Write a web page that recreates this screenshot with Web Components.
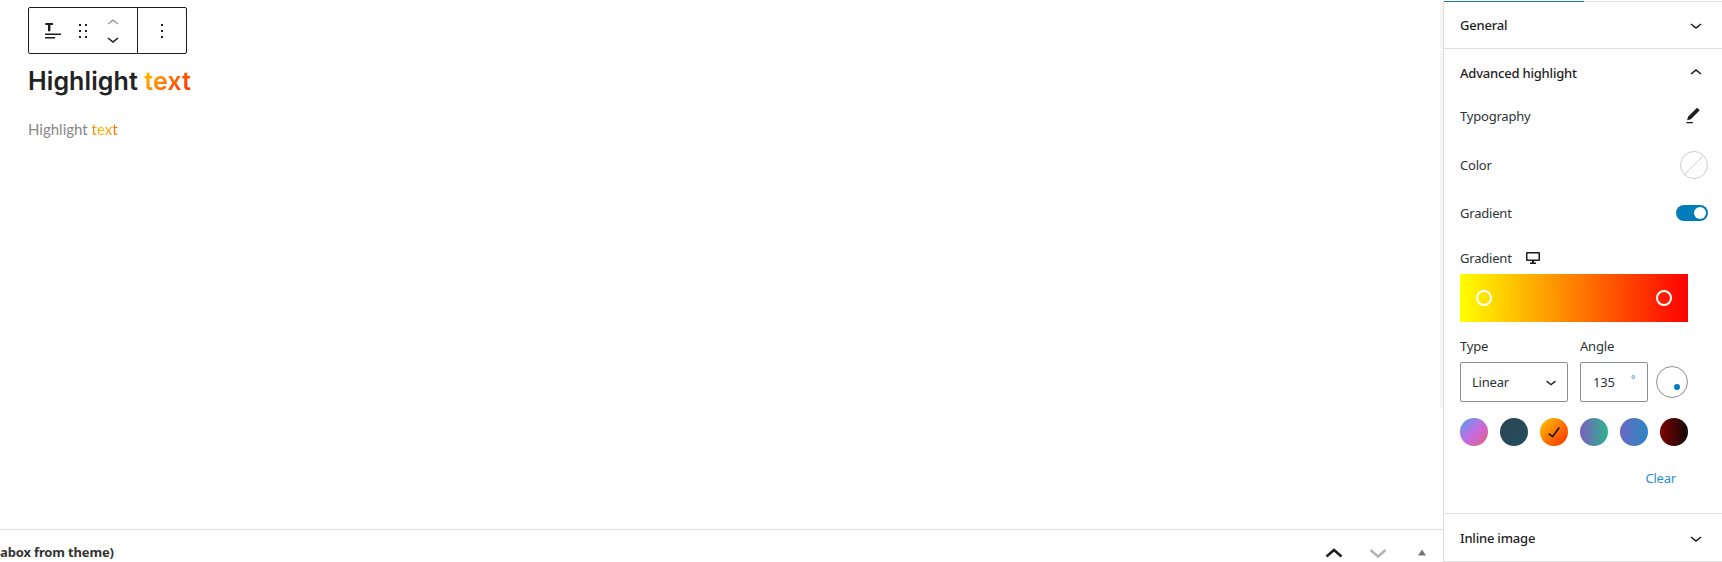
<!DOCTYPE html>
<html>
<head>
<meta charset="utf-8">
<title>Highlight text</title>
<style>
  html, body { margin: 0; height: 100%; overflow: hidden; background: #fff; }
  body { font-family: "Noto Sans", sans-serif; }
</style>
</head>
<body>
<editor-layout>
  <editor-canvas slot="canvas">
    <block-toolbar></block-toolbar>
    <highlight-heading></highlight-heading>
    <highlight-para></highlight-para>
  </editor-canvas>
  <metabox-bar slot="bottom" title-text="abox from theme)"></metabox-bar>
  <settings-sidebar slot="side">
    <panel-section label="General"></panel-section>
    <panel-section label="Advanced highlight" open>
      <setting-row label="Typography">
        <svg slot="control" style="margin-right:5px" width="20" height="20" viewBox="0 0 24 24" fill="#1e1e1e"><path d="M20.1 5.1L16.9 2 6.2 12.7l-1.3 4.4 4.5-1.3L20.1 5.1zM4 20.8h8v-1.5H4v1.5z"/></svg>
      </setting-row>
      <setting-row label="Color" gap="17">
        <color-none slot="control"></color-none>
      </setting-row>
      <setting-row label="Gradient" gap="16">
        <toggle-switch slot="control"></toggle-switch>
      </setting-row>
      <gradient-editor></gradient-editor>
      <gradient-swatches></gradient-swatches>
      <clear-link></clear-link>
    </panel-section>
    <panel-section label="Inline image"></panel-section>
  </settings-sidebar>
</editor-layout>

<script>
const chevronDown = '<path d="M17.5 11.6L12 16l-5.5-4.4.9-1.2L12 14l4.5-3.6 1 1.2z"/>';
const chevronUp = '<path d="M6.5 12.4L12 8l5.5 4.4-.9 1.2L12 10l-4.5 3.6-1-1.2z"/>';

class EditorLayout extends HTMLElement {
  constructor() {
    super();
    this.attachShadow({ mode: 'open' }).innerHTML = `
      <style>
        :host { display: flex; height: 562px; width: 1722px; overflow: hidden; }
        .main { flex: 1; min-width: 0; display: flex; flex-direction: column; }
        .canvas { flex: 1; min-height: 0; background: linear-gradient(#f6f6f6, #f6f6f6) right top / 3px 408px no-repeat; }
        aside { width: 279px; flex: none; }
      </style>
      <div class="main">
        <div class="canvas"><slot name="canvas"></slot></div>
        <slot name="bottom"></slot>
      </div>
      <aside><slot name="side"></slot></aside>`;
  }
}

class EditorCanvas extends HTMLElement {
  constructor() {
    super();
    this.attachShadow({ mode: 'open' }).innerHTML = `
      <style>:host { display: block; padding: 7px 0 0 28px; }</style>
      <slot></slot>`;
  }
}

class BlockToolbar extends HTMLElement {
  constructor() {
    super();
    this.attachShadow({ mode: 'open' }).innerHTML = `
      <style>
        :host { display: flex; width: 159px; height: 47px; box-sizing: border-box; border: 1px solid #1e1e1e; border-radius: 2px; background: #fff; }
        .group { display: flex; align-items: center; }
        .first { width: 109px; box-sizing: border-box; padding-left: 12px; gap: 6px; border-right: 1px solid #1e1e1e; }
        .second { flex: 1; justify-content: center; }
        svg { display: block; fill: #1e1e1e; }
        .mover { width: 24px; display: flex; flex-direction: column; align-items: center; padding-top: 1px; }
        .mover svg:first-child { fill: #a0a0a0; }
      </style>
      <div class="group first">
        <svg width="24" height="24" viewBox="0 0 24 24"><path d="M4.3 4H12v1.9H9.4v6.3H7V5.9H4.3z"/><path d="M4 14.5h16V16H4zM4 18h10v1.5H4z"/></svg>
        <svg width="24" height="24" viewBox="0 0 24 24"><path d="M8 7h2V5H8v2zm0 6h2v-2H8v2zm0 6h2v-2H8v2zm6-14v2h2V5h-2zm0 8h2v-2h-2v2zm0 6h2v-2h-2v2z"/></svg>
        <div class="mover">
          <svg width="24" height="16" viewBox="0 4 24 16">${chevronUp}</svg>
          <svg width="24" height="16" viewBox="0 4 24 16">${chevronDown}</svg>
        </div>
      </div>
      <div class="group second">
        <svg width="24" height="24" viewBox="0 0 24 24"><path d="M13 19h-2v-2h2v2zm0-6h-2v-2h2v2zm0-6h-2V5h2v2z"/></svg>
      </div>`;
  }
}

class HighlightHeading extends HTMLElement {
  constructor() {
    super();
    this.attachShadow({ mode: 'open' }).innerHTML = `
      <style>
        :host { display: block; margin-top: 9px; font: 600 25px/36px Inter, "Liberation Sans", sans-serif; letter-spacing: .1px; color: #222; }
        span { background: linear-gradient(135deg, #ffd000, #ff1a00); -webkit-background-clip: text; background-clip: text; color: transparent; }
      </style>
      Highlight <span>text</span>`;
  }
}

class HighlightPara extends HTMLElement {
  constructor() {
    super();
    this.attachShadow({ mode: 'open' }).innerHTML = `
      <style>
        :host { display: block; margin-top: 18px; font: 400 15px/24px Lato, "Liberation Sans", sans-serif; color: #888; }
        span { background: linear-gradient(90deg, #ff8000, #ffc000 45%, #ff6000); -webkit-background-clip: text; background-clip: text; color: transparent; }
      </style>
      Highlight <span>text</span>`;
  }
}

class MetaboxBar extends HTMLElement {
  constructor() {
    super();
    this.attachShadow({ mode: 'open' }).innerHTML = `
      <style>
        :host { display: flex; align-items: center; height: 33px; box-sizing: border-box; border-top: 1px solid #ddd; font: 700 13px/20px "Noto Sans", sans-serif; letter-spacing: -.15px; color: #333; }
        .title { flex: 1; padding-top: 12px; }
        svg { display: block; margin-top: 14px; }
        .up { margin-right: 20px; }
        .down { margin-right: 20px; }
        .tri { margin-right: 9px; }
      </style>
      <div class="title">${this.getAttribute('title-text')}</div>
      <svg class="up" width="24" height="24" viewBox="0 0 24 24" fill="none" stroke="#1e1e1e" stroke-width="2.5"><path d="M4.5 15.5L12 9l7.5 6.5"/></svg>
      <svg class="down" width="24" height="24" viewBox="0 0 24 24" fill="none" stroke="#b4b5b7" stroke-width="2.5"><path d="M4.5 9L12 15.5 19.5 9"/></svg>
      <svg class="tri" width="24" height="24" viewBox="0 0 24 24" fill="#72777c"><path d="M8 14.5l4-6 4 6z"/></svg>`;
  }
}

class SettingsSidebar extends HTMLElement {
  constructor() {
    super();
    this.attachShadow({ mode: 'open' }).innerHTML = `
      <style>
        :host { display: block; box-sizing: border-box; height: 562px; border-left: 1px solid #ddd; font: 400 13px/20px "Noto Sans", sans-serif; letter-spacing: -.2px; color: #2c3338; }
        .tabs { height: 1px; margin-top: 1px; margin-bottom: -1px; background: #e0e0e0; display: flex; }
        .tabs i { width: 140px; background: #2271b1; }
      </style>
      <div class="tabs"><i></i></div>
      <slot></slot>`;
  }
}

class PanelSection extends HTMLElement {
  constructor() {
    super();
    const open = this.hasAttribute('open');
    this.attachShadow({ mode: 'open' }).innerHTML = `
      <style>
        :host { display: block; border-bottom: 1px solid #e0e0e0; }
        header { display: flex; align-items: center; justify-content: space-between; height: 47px; padding: 0 14px 0 16px; font-weight: 500; color: #1e1e1e; }
        svg { display: block; fill: #1e1e1e; }
        .body { padding: 4px 14px 0 16px; height: 417px; box-sizing: border-box; }
      </style>
      <header><span>${this.getAttribute('label')}</span>
        <svg width="24" height="24" viewBox="0 0 24 24">${open ? chevronUp : chevronDown}</svg></header>
      ${open ? '<div class="body"><slot></slot></div>' : ''}`;
  }
}

class SettingRow extends HTMLElement {
  constructor() {
    super();
    this.attachShadow({ mode: 'open' }).innerHTML = `
      <style>
        :host { display: flex; align-items: center; justify-content: space-between; height: 32px; margin-top: ${this.getAttribute('gap') || 0}px; }
        ::slotted(svg) { display: block; }
      </style>
      <span>${this.getAttribute('label')}</span>
      <slot name="control"></slot>`;
  }
}

class ColorNone extends HTMLElement {
  constructor() {
    super();
    this.attachShadow({ mode: 'open' }).innerHTML = `
      <style>:host { display: block; width: 28px; height: 28px; } svg { display: block; }</style>
      <svg width="28" height="28" viewBox="0 0 28 28" fill="none" stroke="#ccc"><circle cx="14" cy="14" r="13.5"/><path d="M4.5 23.5l19-19"/></svg>`;
  }
}

class ToggleSwitch extends HTMLElement {
  constructor() {
    super();
    this.attachShadow({ mode: 'open' }).innerHTML = `
      <style>
        :host { display: flex; justify-content: flex-end; align-items: center; width: 32px; height: 16px; box-sizing: border-box; padding-right: 2px; border-radius: 8px; background: #007cba; }
        i { display: block; width: 12px; height: 12px; border-radius: 50%; background: #fff; }
      </style>
      <i></i>`;
  }
}

class GradientEditor extends HTMLElement {
  constructor() {
    super();
    this.attachShadow({ mode: 'open' }).innerHTML = `
      <style>
        :host { display: block; width: 228px; margin-top: 20px; }
        .title { display: flex; align-items: center; gap: 14px; height: 18px; margin-bottom: 7px; }
        .bar { position: relative; height: 48px; background: linear-gradient(90deg, #ff0, #f00); }
        .stop { position: absolute; top: 16px; width: 16px; height: 16px; box-sizing: border-box; border: 2px solid #fff; border-radius: 50%; }
        .fields { display: flex; margin-top: 16px; }
        label { display: block; height: 16px; line-height: 16px; margin-bottom: 8px; }
        .box { box-sizing: border-box; height: 40px; border: 1px solid #8c8f94; border-radius: 2px; display: flex; align-items: center; justify-content: space-between; color: #2c3338; }
        .type { width: 108px; margin-right: 12px; }
        .type .box { padding: 0 9px 0 11px; }
        .angle { width: 68px; margin-right: 8px; }
        .angle .box { padding: 0 12px; position: relative; }
        .deg { position: absolute; right: 12px; top: 10px; font-size: 10px; line-height: 12px; color: #3a86b8; }
        .dial { position: relative; width: 32px; height: 32px; box-sizing: border-box; border: 1px solid #8c8f94; border-radius: 50%; margin-top: 28px; }
        .dial i { position: absolute; left: 17px; top: 17px; width: 6px; height: 6px; border-radius: 50%; background: #007cba; }
        svg { display: block; }
      </style>
      <div class="title"><span>Gradient</span>
        <svg width="14" height="12" viewBox="0 0 14 12" fill="#1e1e1e"><path d="M1 0h12a1 1 0 0 1 1 1v7a1 1 0 0 1-1 1H1a1 1 0 0 1-1-1V1a1 1 0 0 1 1-1zm.5 1.5v6h11v-6zM6 9h2v1.5h2V12H4v-1.5h2z"/></svg>
      </div>
      <div class="bar">
        <div class="stop" style="left: 16px"></div>
        <div class="stop" style="left: 196px"></div>
      </div>
      <div class="fields">
        <div class="type"><label>Type</label>
          <div class="box"><span>Linear</span>
            <svg width="14" height="14" viewBox="4 4 16 16" fill="#1e1e1e">${chevronDown}</svg>
          </div>
        </div>
        <div class="angle"><label>Angle</label>
          <div class="box"><span>135</span><span class="deg">°</span></div>
        </div>
        <div class="dial"><i></i></div>
      </div>`;
  }
}

class GradientSwatches extends HTMLElement {
  constructor() {
    super();
    const gradients = [
      'linear-gradient(135deg, #4aa3f0, #c46be0 50%, #e85f7e)',
      'linear-gradient(135deg, #2a4450, #254e60)',
      'linear-gradient(135deg, #ffc800, #ff2a00)',
      'linear-gradient(90deg, #7c5fc0, #2db48c)',
      'linear-gradient(90deg, #6b68c0, #2a88c4)',
      'linear-gradient(90deg, #800000, #100808)',
    ];
    this.attachShadow({ mode: 'open' }).innerHTML = `
      <style>
        :host { display: flex; gap: 12px; margin-top: 16px; }
        div { width: 28px; height: 28px; border-radius: 50%; display: flex; align-items: center; justify-content: center; }
      </style>
      ${gradients.map((g, i) => `<div style="background:${g}">${i === 2 ? '<svg width="24" height="24" viewBox="0 0 24 24" fill="#111"><path d="M16.7 7.1l-6.3 8.5-3.3-2.5-.9 1.2 4.5 3.4L17.9 8z"/></svg>' : ''}</div>`).join('')}`;
  }
}

class ClearLink extends HTMLElement {
  constructor() {
    super();
    this.attachShadow({ mode: 'open' }).innerHTML = `
      <style>:host { display: block; width: 216px; margin-top: 22px; text-align: right; color: #2a8fd0; }</style>
      Clear`;
  }
}

customElements.define('editor-layout', EditorLayout);
customElements.define('editor-canvas', EditorCanvas);
customElements.define('block-toolbar', BlockToolbar);
customElements.define('highlight-heading', HighlightHeading);
customElements.define('highlight-para', HighlightPara);
customElements.define('metabox-bar', MetaboxBar);
customElements.define('settings-sidebar', SettingsSidebar);
customElements.define('panel-section', PanelSection);
customElements.define('setting-row', SettingRow);
customElements.define('color-none', ColorNone);
customElements.define('toggle-switch', ToggleSwitch);
customElements.define('gradient-editor', GradientEditor);
customElements.define('gradient-swatches', GradientSwatches);
customElements.define('clear-link', ClearLink);
</script>
</body>
</html>
